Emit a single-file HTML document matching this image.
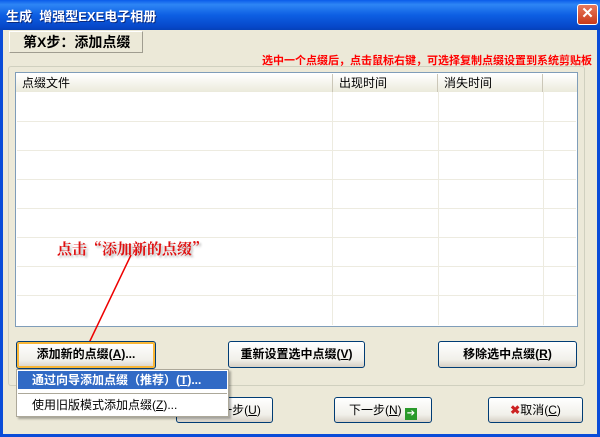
<!DOCTYPE html>
<html><head><meta charset="utf-8"><style>
*{margin:0;padding:0;box-sizing:border-box}
body{width:600px;height:437px;overflow:hidden;background:#0A4CD8;font-family:"Liberation Sans","Noto Sans CJK SC","WenQuanYi Zen Hei",sans-serif;font-size:12px;position:relative}
.a{position:absolute}
.title{left:0;top:0;width:600px;height:30px;background:linear-gradient(#0A5BEA,#2E86F5 15%,#0D5FE3 50%,#0647C9 90%,#0541B8);}
.title span{position:absolute;left:6px;top:6px;color:#fff;font-weight:bold;font-size:13px;text-shadow:1px 1px #0a2a80}
.close{left:577px;top:4px;width:21px;height:21px;border:1px solid #fff;border-radius:3px;background:linear-gradient(#E9795C,#C9391A);color:#fff;font-size:15px;text-align:center;line-height:18px;font-weight:bold}
.body{left:3px;top:30px;width:594px;height:404px;background:#ECE9D8}
.btn{position:absolute;border:1px solid #003C74;border-radius:3px;background:linear-gradient(#fff,#F1F0EA 70%,#D6D0C5);text-align:center;font-size:12px;font-weight:bold;color:#000}
.hdr{position:absolute;top:74px;height:18px;background:linear-gradient(#fff,#EBEADB);border-right:1px solid #CBC7B8;padding-left:6px;line-height:18px;font-size:12px}
.row{position:absolute;left:17px;width:559px;height:1px;background:#EDEBE0}
.col{position:absolute;top:92px;width:1px;height:233px;background:#EDEBE0}
</style></head><body>
<div class="a title"><span>生成 &nbsp;增强型EXE电子相册</span></div>
<div class="a close">✕</div>
<div class="a body"></div>
<div class="a" style="left:9px;top:31px;width:134px;height:22px;border:1px solid #fff;border-right-color:#A09D90;border-bottom-color:#A09D90;background:#ECE9D8;font-weight:bold;font-size:14px;line-height:20px;padding-left:13px">第X步：添加点缀</div>
<div class="a" style="left:262px;top:52px;color:#F00;font-size:11px;font-weight:bold;white-space:nowrap">选中一个点缀后，点击鼠标右键，可选择复制点缀设置到系统剪贴板</div>
<div class="a" style="left:8px;top:66px;width:577px;height:320px;border:1px solid #D0D0BF;border-radius:3px"></div>
<div class="a" style="left:15px;top:72px;width:563px;height:255px;border:1px solid #7F9DB9;background:#fff"></div>
<div class="hdr" style="left:16px;width:317px">点缀文件</div>
<div class="hdr" style="left:333px;width:105px">出现时间</div>
<div class="hdr" style="left:438px;width:105px">消失时间</div>
<div class="hdr" style="left:543px;width:34px;border-right:none"></div>
<div class="col" style="left:332px"></div><div class="col" style="left:438px"></div><div class="col" style="left:543px"></div>
<div class="row" style="top:121px"></div><div class="row" style="top:150px"></div><div class="row" style="top:179px"></div><div class="row" style="top:208px"></div><div class="row" style="top:237px"></div><div class="row" style="top:266px"></div><div class="row" style="top:295px"></div>
<div class="a" style="left:57px;top:238px;color:#E01010;font-weight:bold;font-size:15px;font-family:'Noto Serif CJK SC',serif;text-shadow:2px 2px 2px #bbb;white-space:nowrap">点击“添加新的点缀”</div>
<svg class="a" style="left:0;top:0" width="600" height="437"><line x1="131" y1="255" x2="89" y2="343" stroke="#E00" stroke-width="1.5"/></svg>
<div class="btn" style="left:16px;top:341px;width:140px;height:28px;line-height:25px;box-shadow:inset 0 0 0 2px #F8B636">添加新的点缀(<u>A</u>)...</div>
<div class="btn" style="left:228px;top:341px;width:137px;height:27px;line-height:25px">重新设置选中点缀(<u>V</u>)</div>
<div class="btn" style="left:438px;top:341px;width:139px;height:27px;line-height:25px">移除选中点缀(<u>R</u>)</div>
<div class="btn" style="left:176px;top:397px;width:97px;height:26px;line-height:24px;font-weight:normal;padding-left:20px">上一步(<u>U</u>)</div>
<div class="btn" style="left:334px;top:397px;width:98px;height:26px;line-height:24px;font-weight:normal">下一步(<u>N</u>) <span style="display:inline-block;width:12px;height:12px;background:#2A9A2A;color:#fff;font-size:10px;line-height:12px;vertical-align:-2px">➔</span></div>
<div class="btn" style="left:488px;top:397px;width:95px;height:26px;line-height:24px;font-weight:normal"><span style="color:#C22;font-weight:bold">✖</span>取消(<u>C</u>)</div>
<div class="a" style="left:16px;top:369px;width:213px;height:48px;background:#fff;border:1px solid #ACA899;box-shadow:2px 2px 2px rgba(0,0,0,.3)"></div>
<div class="a" style="left:18px;top:371px;width:209px;height:18px;background:#316AC5;color:#fff;font-weight:bold;line-height:18px;padding-left:14px">通过向导添加点缀（推荐）(<u>T</u>)...</div>
<div class="a" style="left:18px;top:393px;width:209px;height:2px;border-top:1px solid #ACA899;border-bottom:1px solid #fff"></div>
<div class="a" style="left:32px;top:397px;line-height:16px;font-size:12px">使用旧版模式添加点缀(<u>Z</u>)...</div>
</body></html>
